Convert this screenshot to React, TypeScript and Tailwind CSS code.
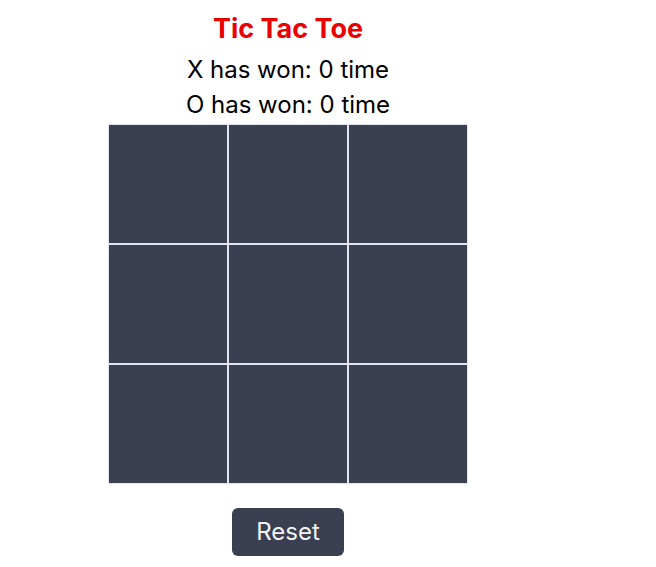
import { useState } from 'react';

type Cell = 'X' | 'O' | null;

export default function App() {
  const [board, setBoard] = useState<Cell[]>(Array(9).fill(null));
  const [turn, setTurn] = useState<'X' | 'O'>('X');
  const [xWins] = useState(0);
  const [oWins] = useState(0);

  const play = (i: number) => {
    if (board[i]) return;
    const next = [...board];
    next[i] = turn;
    setBoard(next);
    setTurn(turn === 'X' ? 'O' : 'X');
  };

  const reset = () => {
    setBoard(Array(9).fill(null));
    setTurn('X');
  };

  return (
    <div className="w-[576px] flex flex-col items-center pt-3 font-['Inter','Noto_Sans',sans-serif] text-black">
      <h1 className="text-[27px] leading-[34px] font-bold text-[#eb0000]">Tic Tac Toe</h1>
      <p className="mt-[6px] text-[24px] leading-[35px]">X has won: {xWins} time</p>
      <p className="text-[24px] leading-[35px]">O has won: {oWins} time</p>

      {/* board: 3x3 cells, each 120px with its own 1px border */}
      <div className="mt-[2px] grid grid-cols-3 w-[360px]">
        {board.map((c, i) => (
          <button
            key={i}
            type="button"
            onClick={() => play(i)}
            className="w-[120px] h-[120px] border border-[#e2e3ee] bg-[#3a3f52] flex items-center justify-center text-[64px] font-bold text-white cursor-pointer"
          >
            {c}
          </button>
        ))}
      </div>

      <button
        type="button"
        onClick={reset}
        className="mt-6 h-12 px-6 rounded-md bg-[#3a3f52] text-[24px] leading-none text-[#f3f4f6] cursor-pointer"
      >
        Reset
      </button>
    </div>
  );
}
